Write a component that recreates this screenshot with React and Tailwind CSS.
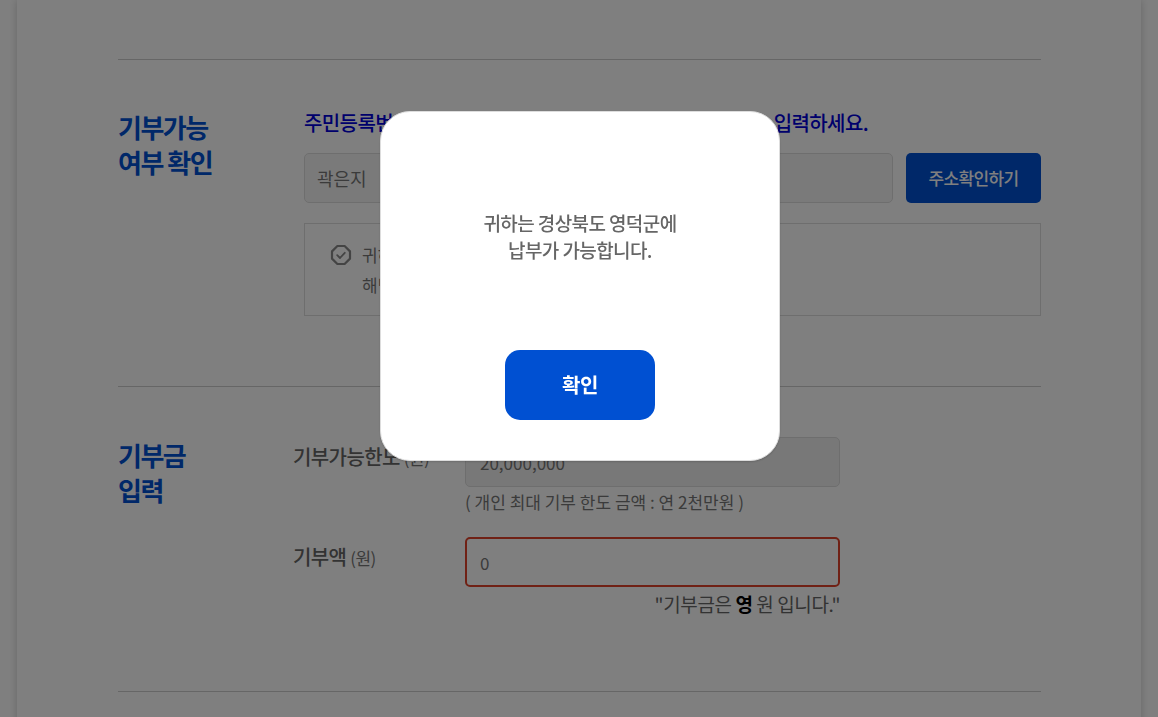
const FONT = "font-['Noto_Sans_CJK_KR','Noto_Sans',sans-serif]";

function CheckIcon() {
  return (
    <svg width="22" height="22" viewBox="0 0 22 22" fill="none" className="shrink-0">
      <path
        d="M7.4 2h7.2l5.4 5.4v7.2L14.6 20H7.4L2 14.600V7.400z"
        stroke="#888"
        strokeWidth="2.2"
        strokeLinejoin="round"
      />
      <path d="M7.200 11.200l2.800 2.800 4.800-5.200" stroke="#888" strokeWidth="1.800" strokeLinecap="round" strokeLinejoin="round" />
    </svg>
  );
}

function Modal() {
  return (
    <div className="fixed inset-0 z-50 bg-black/50 flex justify-center pt-[111px] pl-[2px]">
      <div className="w-[400px] h-[350px] bg-white rounded-[30px] border border-[#ddd] flex flex-col items-center shadow-[0_1px_2px_rgba(0,0,0,0.15)]">
        <p className="mt-[97px] text-[19px] leading-[27px] font-medium text-[#666] text-center tracking-[-0.6px]">
          귀하는 경상북도 영덕군에
          <br />
          납부가 가능합니다.
        </p>
        <button className="mt-[87px] w-[150px] h-[70px] rounded-[15px] bg-[#0050d2] text-white text-[20px] font-semibold tracking-[-0.5px]">
          확인
        </button>
      </div>
    </div>
  );
}

export default function App() {
  return (
    <div className={`h-screen overflow-hidden bg-white ${FONT}`}>
      <div className="mx-[17px] w-[1124px] min-h-[760px] bg-white shadow-[0_0_8px_rgba(0,0,0,0.2)] pl-[101px] pr-[100px] pt-[59px]">
        {/* 기부가능 여부 확인 */}
        <section className="border-t border-[#ccc] h-[327px] flex pt-[49px]">
          <h2 className="w-[186px] shrink-0 text-[26px] leading-[35px] font-bold text-[#0050d2] tracking-[-1.5px]">
            기부가능
            <br />
            여부 확인
          </h2>
          <div className="w-[737px]">
            <p className="h-[28px] text-[20px] leading-[28px] font-medium text-[#0000d8] tracking-[-0.6px] whitespace-nowrap">
              주민등록번호를 기준으로 주민등록상 주소 시군구를 확인<span className="ml-[23px]">입력하세요.</span>
            </p>
            <div className="mt-[16px] flex gap-[13px]">
              <input
                readOnly
                value="곽은지"
                className="w-[589px] h-[50px] px-[12px] rounded-[5px] border border-[#ddd] bg-[#f5f5f5] text-[18px] text-[#777] outline-none"
              />
              <button className="w-[135px] h-[50px] rounded-[5px] bg-[#0050d2] text-white text-[17px] font-medium tracking-[-0.6px]">
                주소확인하기
              </button>
            </div>
            <div className="mt-[20px] h-[93px] border border-[#ddd] pl-[25px] pt-[20px] flex gap-[10px]">
              <CheckIcon />
              <p className="text-[17px] leading-[30px] text-[#777] -mt-[4px]">
                귀하의 주소지
                <br />
                해당 지역
              </p>
            </div>
          </div>
        </section>

        {/* 기부금 입력 */}
        <section className="border-t border-[#ccc] h-[305px] flex pt-[50px]">
          <h2 className="w-[175px] shrink-0 text-[26px] leading-[35px] font-bold text-[#0050d2] tracking-[-1.5px]">
            기부금
            <br />
            입력
          </h2>
          <div className="w-[547px]">
            <div className="flex">
              <div className="w-[172px] text-[20px] leading-[40px] font-medium text-[#666] tracking-[-0.6px]">
                기부가능한도 <span className="text-[17px] font-normal text-[#777]">(원)</span>
              </div>
              <div className="w-[375px]">
                <input
                  readOnly
                  value="20,000,000"
                  className="w-full h-[50px] px-[14px] rounded-[5px] border border-[#ddd] bg-[#f0f0f0] text-[17px] text-[#777] outline-none"
                />
                <p className="mt-[2px] text-[17px] leading-[26px] text-[#777]">
                  ( 개인 최대 기부 한도 금액 : 연 2천만원 )
                </p>
              </div>
            </div>
            <div className="flex mt-[22px]">
              <div className="w-[172px] text-[20px] leading-[40px] font-medium text-[#666] tracking-[-0.6px]">
                기부액 <span className="text-[17px] font-normal text-[#777]">(원)</span>
              </div>
              <div className="w-[375px]">
                <input
                  readOnly
                  value="0"
                  className="w-full h-[50px] px-[13px] rounded-[5px] border-2 border-[#e0432a] bg-white text-[17px] text-[#777] outline-none"
                />
                <p className="mt-[2px] text-right text-[19px] leading-[30px] text-[#666] tracking-[-0.4px]">
                  "기부금은 <b className="text-black">영</b> 원 입니다."
                </p>
              </div>
            </div>
          </div>
        </section>
        <div className="border-t border-[#ccc]" />
      </div>
      <Modal />
    </div>
  );
}
